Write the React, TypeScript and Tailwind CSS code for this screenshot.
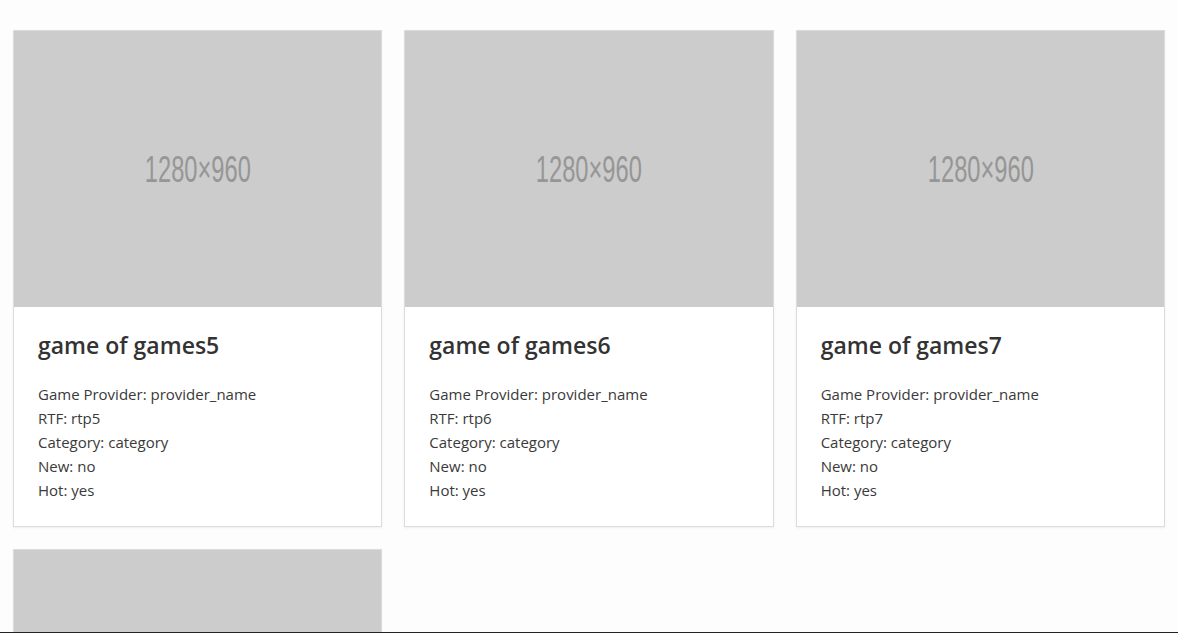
const games = [5, 6, 7, 8];

const Placeholder = () => (
  <div className="flex h-[276px] w-full items-center justify-center bg-[#cccccc]">
    <span
      className="inline-block scale-x-[0.64] text-[37px] leading-none text-[#969696]"
      style={{ fontFamily: '"Liberation Sans Narrow", "Liberation Sans", sans-serif' }}
    >
      1280×960
    </span>
  </div>
);

const GameCard = ({ n }: { n: number }) => (
  <div className="flex flex-col border border-[#dcdcdc] bg-white shadow-[0_1px_2px_rgba(0,0,0,0.06)]">
    <Placeholder />
    <div className="p-6 text-[#333333]">
      <h4 className="mb-[22px] text-[23px] leading-[29px] font-semibold">game of games{n}</h4>
      <div className="text-[15px] leading-6 text-[#3a3a3a]">
        <div>Game Provider: provider_name</div>
        <div>RTF: rtp{n}</div>
        <div>Category: category</div>
        <div>New: no</div>
        <div>Hot: yes</div>
      </div>
    </div>
  </div>
);

export default function App() {
  return (
    <div
      className="min-h-screen bg-[#fdfdfd] pt-[30px] pl-[13px] pr-[13px]"
      style={{ fontFamily: '"Open Sans", "Noto Sans", sans-serif' }}
    >
      <div className="grid w-[1152px] grid-cols-3 gap-[22px]">
        {games.map((n) => (
          <GameCard key={n} n={n} />
        ))}
      </div>
      <div className="fixed right-0 bottom-0 left-0 h-px bg-[#222222]" />
    </div>
  );
}
